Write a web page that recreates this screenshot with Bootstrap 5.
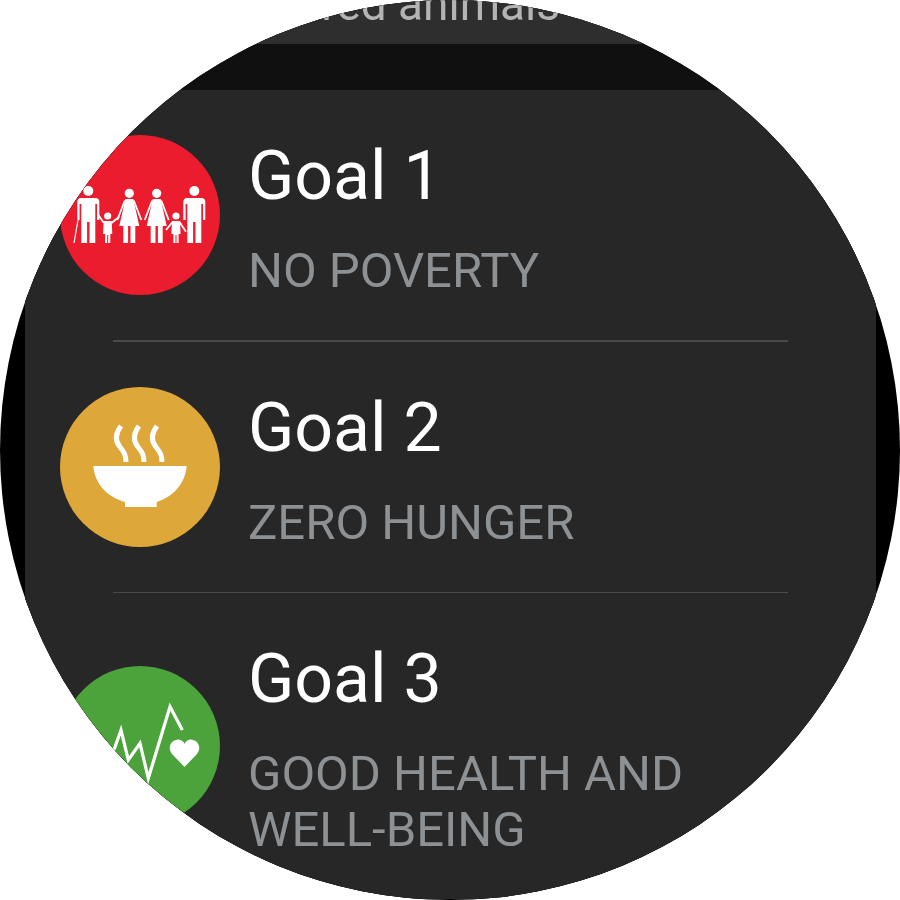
<!doctype html>
<html lang="en">
<head>
  <title>Goals</title>
  <meta charset="utf-8" />
  <meta name="viewport" content="width=device-width, initial-scale=1" />
  <link href="https://cdn.jsdelivr.net/npm/bootstrap@5.3.2/dist/css/bootstrap.min.css" rel="stylesheet" />
  <style>
    html, body { height: 900px; overflow: hidden; background: #fff; }
    .watch-face { width: 900px; height: 900px; background: #000; font-family: Roboto, "Liberation Sans", sans-serif; filter: blur(.5px); }
    .watch-screen { width: 851px; margin-left: 25px; background: #101010; }
    .prev-card { height: 44px; background: #2e2e2e; color: #b4b4b4; font-size: 46px; line-height: 8px; padding-left: 118px; white-space: nowrap; }
    .goal-list { margin-top: 46px; background: #272727; }
    .goal-row { padding: 45px 0 45px 35px; gap: 28px; }
    .goal-icon { width: 160px; height: 160px; flex: 0 0 160px; }
    .goal-title { color: #fff; font-size: 68px; line-height: 83px; margin-bottom: 25px; }
    .goal-sub { color: #8d9194; font-size: 49px; line-height: 56px; width: 470px; margin-bottom: -4px; }
    .goal-rule { margin: 0 88px; border: 0; height: 1.5px; background: #4a4a4a; opacity: 1; }
  </style>
</head>
<body class="m-0">

  <div class="watch-face rounded-circle overflow-hidden">
    <div class="watch-screen">
      <div class="prev-card overflow-hidden">Endangered animals</div>

      <div class="goal-list">
        <div class="goal-row d-flex align-items-center">
          <svg class="goal-icon" viewBox="0 0 160 160">
            <defs>
              <g id="man">
                <path fill="#fff" d="M-7 0H7Q11 0 11 4V22H8.7V6H7V45H1.2V24H-1.2V45H-7V6H-8.7V22H-11V4Q-11 0-7 0Z" />
              </g>
              <g id="woman" fill="#fff">
                <path d="M-4 0H4L10 27H6V44H1.2V27H-1.2V44H-6V27H-10Z" />
                <path d="M-4.5 1.5L-12 21M4.5 1.5L12 21" stroke="#fff" stroke-width="1.8" fill="none" />
              </g>
              <g id="child" fill="#fff">
                <path d="M-4 0H4L4.6 13H2.6V22H.5V14H-.5V22H-2.6V13H-4.6Z" />
              </g>
            </defs>
            <circle cx="80" cy="80" r="80" fill="#ea1c2d" />
            <circle cx="28.3" cy="56" r="5" fill="#fff" />
            <use href="#man" x="28.3" y="63" />
            <path d="M18 85L14 108" stroke="#fff" stroke-width="1.2" />
            <circle cx="47.7" cy="81" r="3.6" fill="#fff" />
            <use href="#child" x="47.7" y="86" />
            <path d="M38.3 80L44 88M59.3 81.7L51.5 88" stroke="#fff" stroke-width="1.8" />
            <circle cx="69.3" cy="58.3" r="4.6" fill="#fff" />
            <use href="#woman" x="69.3" y="64" />
            <circle cx="96.7" cy="58.3" r="4.6" fill="#fff" />
            <use href="#woman" x="96.7" y="64" />
            <circle cx="116" cy="81" r="3.6" fill="#fff" />
            <use href="#child" x="116" y="86" />
            <path d="M106 95L112.5 87M126 96.7L119.5 87" stroke="#fff" stroke-width="1.8" />
            <circle cx="134.3" cy="56" r="5" fill="#fff" />
            <use href="#man" x="134.3" y="63" />
          </svg>
          <div>
            <div class="goal-title">Goal 1</div>
            <div class="goal-sub">NO POVERTY</div>
          </div>
        </div>
        <hr class="goal-rule" />

        <div class="goal-row d-flex align-items-center">
          <svg class="goal-icon" viewBox="0 0 160 160">
            <circle cx="80" cy="80" r="80" fill="#dea739" />
            <path fill="#fff" d="M33.3 79H126.7C125 98 112 110 96.7 115V120H65V115C48 110 35 98 33.3 79Z" />
            <g fill="none" stroke="#fff" stroke-width="5">
              <path d="M61 39C55 47 55 54 60 60C64 65 66 68 66 75" />
              <path d="M79 39C73 47 73 54 78 60C82 65 84 68 84 75" />
              <path d="M97 39C91 47 91 54 96 60C100 65 102 68 102 75" />
            </g>
          </svg>
          <div>
            <div class="goal-title">Goal 2</div>
            <div class="goal-sub">ZERO HUNGER</div>
          </div>
        </div>
        <hr class="goal-rule" />

        <div class="goal-row d-flex align-items-center">
          <svg class="goal-icon" viewBox="0 0 160 160">
            <circle cx="80" cy="80" r="80" fill="#4ca23b" />
            <path fill="none" stroke="#fff" stroke-width="3.2" d="M45 105L55 81L61 64L68.3 94L80 77.3L88.3 112.3L110 40.7L122.3 64" />
            <path fill="#fff" d="M124.5 101L112 88C106 80 113 73 119 73.5C122 74 124 76 124.5 78C125 76 127 74 130 73.5C136 73 143 80 137 88Z" />
          </svg>
          <div>
            <div class="goal-title">Goal 3</div>
            <div class="goal-sub">GOOD HEALTH AND WELL-BEING</div>
          </div>
        </div>
      </div>
    </div>
  </div>

  <script src="https://cdn.jsdelivr.net/npm/bootstrap@5.3.2/dist/js/bootstrap.bundle.min.js"></script>
</body>
</html>
